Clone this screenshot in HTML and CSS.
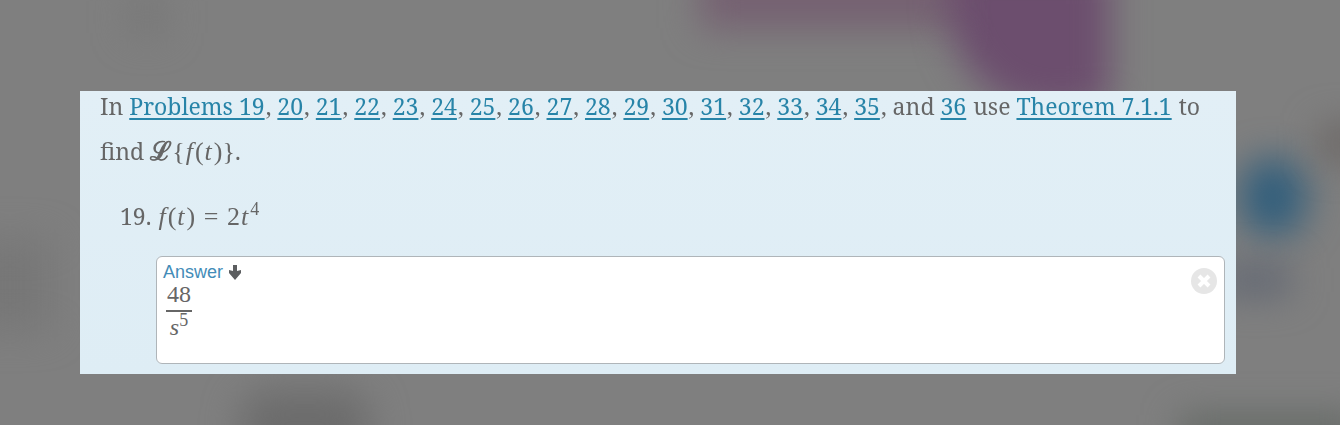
FILE: index.html
```html
<!DOCTYPE html>
<html lang="en">
<head>
    <meta charset="UTF-8">
    <meta name="viewport" content="width=device-width, initial-scale=1.0">
    <title>Problem 19</title>
    <link rel="stylesheet" href="styles.css">
</head>
<body>
    <div class="backdrop" aria-hidden="true">
        <div class="blob purple-bar"></div>
        <div class="blob purple"></div>
        <div class="blob blue"></div>
        <div class="blob slate"></div>
        <div class="blob dark-left"></div>
        <div class="blob dark-bottom"></div>
        <div class="blob dark-top"></div>
        <div class="blob dark-right"></div>
        <div class="blob green"></div>
    </div>
    <main class="panel">
        <p class="intro">In <a href="#p19">Problems 19</a>, <a href="#p20">20</a>, <a href="#p21">21</a>, <a href="#p22">22</a>, <a href="#p23">23</a>, <a href="#p24">24</a>, <a href="#p25">25</a>, <a href="#p26">26</a>, <a href="#p27">27</a>, <a href="#p28">28</a>, <a href="#p29">29</a>, <a href="#p30">30</a>, <a href="#p31">31</a>, <a href="#p32">32</a>, <a href="#p33">33</a>, <a href="#p34">34</a>, <a href="#p35">35</a>, and <a href="#p36">36</a> use <a href="#theorem">Theorem 7.1.1</a> to <span class="phrase">find <span class="math"><span class="script">ℒ</span>{<i>f</i>(<i>t</i>)}</span>.</span></p>
        <section class="problem" id="p19">
            <p class="question">19. <span class="math"><i>f</i>(<i>t</i>) <span class="equals">=</span> 2<i>t</i><sup>4</sup></span></p>
            <div class="answer">
                <button class="toggle" type="button">Answer
                    <svg width="12" height="15" viewBox="0 0 12 15" aria-hidden="true"><path d="M4 0h4v6l4-1v3l-6 7-6-7v-3l4 1z" fill="#5c5e60"/></svg>
                </button>
                <div class="fraction">
                    <span class="top">48</span>
                    <span class="bottom"><i>s</i><sup>5</sup></span>
                </div>
                <button class="close" type="button" aria-label="Close answer">
                    <svg width="28" height="28" viewBox="0 0 28 28" aria-hidden="true">
                        <circle cx="14" cy="14" r="13" fill="#e6e6e6"/>
                        <path d="M9 9l10 10M19 9L9 19" stroke="#fff" stroke-width="4"/>
                    </svg>
                </button>
            </div>
        </section>
    </main>
</body>
</html>
```
FILE: styles.css
```css
* {
    box-sizing: border-box;
}
body {
    margin: 0;
    background: #7f7f7f;
    color: #666;
    font-family: "Noto Serif", "Liberation Serif", serif;
    font-size: 23px;
}
p {
    margin: 0;
}
.backdrop {
    position: fixed;
    inset: 0;
    overflow: hidden;
    z-index: -1;
}
.blob {
    position: absolute;
    filter: blur(18px);
}
.purple-bar {
    left: 700px;
    top: -30px;
    width: 300px;
    height: 58px;
    background: #756071;
}
.purple {
    left: 950px;
    top: -40px;
    width: 160px;
    height: 150px;
    background: #6c4e6e;
    border-radius: 0 0 20px 100px;
}
.blue {
    left: 1240px;
    top: 158px;
    width: 66px;
    height: 78px;
    background: #335f7c;
    border-radius: 30px;
}
.slate {
    left: 1220px;
    top: 265px;
    width: 70px;
    height: 30px;
    background: #606672;
}
.dark-left {
    left: -30px;
    top: 240px;
    width: 80px;
    height: 90px;
    background: #777;
}
.dark-bottom {
    left: 240px;
    top: 390px;
    width: 130px;
    height: 70px;
    background: #6c6c6c;
    border-radius: 30px;
}
.dark-top {
    left: 130px;
    top: 0;
    width: 34px;
    height: 34px;
    background: #777;
}
.dark-right {
    left: 1320px;
    top: 125px;
    width: 50px;
    height: 36px;
    background: #6b6664;
}
.green {
    left: 1180px;
    top: 415px;
    width: 180px;
    height: 40px;
    background: #656a66;
}
.panel {
    display: flow-root;
    margin: 91px 104px 0 80px;
    padding: 0 11px 10px 20px;
    background: linear-gradient(#e2eff6, #deedf5);
}
.intro {
    margin-top: -7px;
    line-height: 45px;
}
.intro a {
    padding-right: 1px;
    color: #2784a8;
    text-decoration-thickness: 2px;
    text-underline-offset: 3px;
}
.phrase {
    white-space: nowrap;
}
.math {
    font-family: "Liberation Serif", serif;
    font-size: 26px;
    line-height: 1;
}
.math i {
    margin: 0 2px 0 1px;
}
.math sup {
    font-size: 18px;
    line-height: 0;
}
.script {
    font-family: "DejaVu Serif", serif;
    -webkit-text-stroke: 1px #666;
}
.equals {
    margin: 0 2px;
}
.problem {
    padding-top: 18px;
}
.question {
    padding-left: 20px;
    line-height: 48px;
}
.answer {
    position: relative;
    min-height: 108px;
    margin: 16px 0 0 56px;
    padding: 5px 6px;
    background: #fff;
    border: 1px solid #afb5b9;
    border-radius: 6px;
}
.answer button {
    padding: 0;
    border: 0;
    background: none;
    cursor: pointer;
}
.answer .toggle {
    display: flex;
    align-items: center;
    gap: 6px;
    color: #438cb8;
    font: 18px/20px "Liberation Sans", sans-serif;
}
.answer .close {
    position: absolute;
    top: 10px;
    right: 6px;
    display: flex;
}
.fraction {
    display: flex;
    flex-direction: column;
    align-items: center;
    width: fit-content;
    margin-left: 3px;
    font: 24px/24px "Liberation Serif", serif;
}
.fraction sup {
    font-size: 18px;
    line-height: 0;
}
.top {
    padding: 0 1px 4px;
    border-bottom: 2px solid #666;
}
.bottom {
    margin-top: 3px;
}
```
